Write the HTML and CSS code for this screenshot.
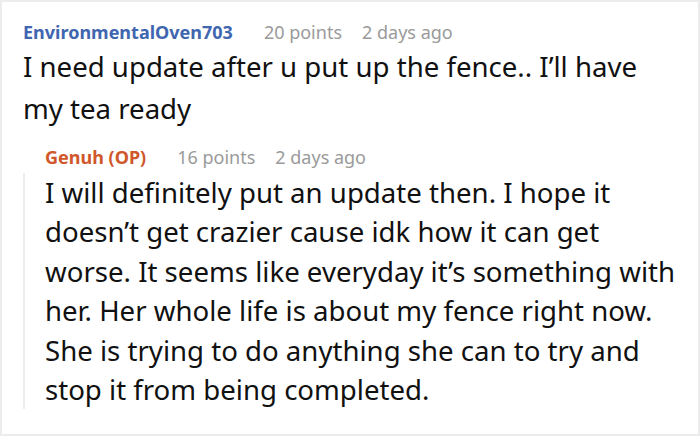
FILE: index.html
```html
<!DOCTYPE html>
<html>
<head>
<meta charset="utf-8">
<link rel="stylesheet" href="styles.css">
</head>
<body>
<div class="frame">
  <div class="comment">
    <div class="meta">
      <span class="user">EnvironmentalOven703</span>
      <span class="info">20 points</span>
      <span class="info">2 days ago</span>
    </div>
    <div class="body top-body">I need update after u put up the fence.. I’ll have my tea ready</div>
    <div class="reply">
      <div class="meta">
        <span class="user op">Genuh (OP)</span>
        <span class="info">16 points</span>
        <span class="info">2 days ago</span>
      </div>
      <div class="body">I will definitely put an update then. I hope it doesn’t get crazier cause idk how it can get worse. It seems like everyday it’s something with her. Her whole life is about my fence right now. She is trying to do anything she can to try and stop it from being completed.</div>
    </div>
  </div>
</div>
</body>
</html>
```

FILE: styles.css
```css
html, body {
  margin: 0;
  padding: 0;
  background: #fff;
}
.frame {
  width: 700px;
  height: 436px;
  box-sizing: border-box;
  border: 2px solid #ececec;
  overflow: hidden;
  font-family: "Noto Sans", "Open Sans", sans-serif;
  color: #111;
}
.comment {
  padding: 18px 0 0 21px;
}
.meta {
  display: flex;
  gap: 20px;
  font-size: 18px;
  line-height: 24px;
  align-items: baseline;
}
.user {
  font-weight: 700;
  color: #4066b0;
  margin-right: 11px;
}
.user.op {
  color: #d0572a;
}
.info {
  color: #9a9a9a;
}
.body {
  font-size: 27.6px;
  line-height: 40px;
  margin-top: 1px;
  padding-right: 12px;
}
.top-body {
  line-height: 42px;
  padding-right: 36px;
}
.reply {
  margin-top: 16px;
  padding-left: 22px;
}
.reply .meta {
  margin-bottom: 4px;
}
.reply .body {
  line-height: 39.4px;
  margin-left: -22px;
  padding-left: 20px;
  border-left: 2px solid #eeeeee;
}
```
